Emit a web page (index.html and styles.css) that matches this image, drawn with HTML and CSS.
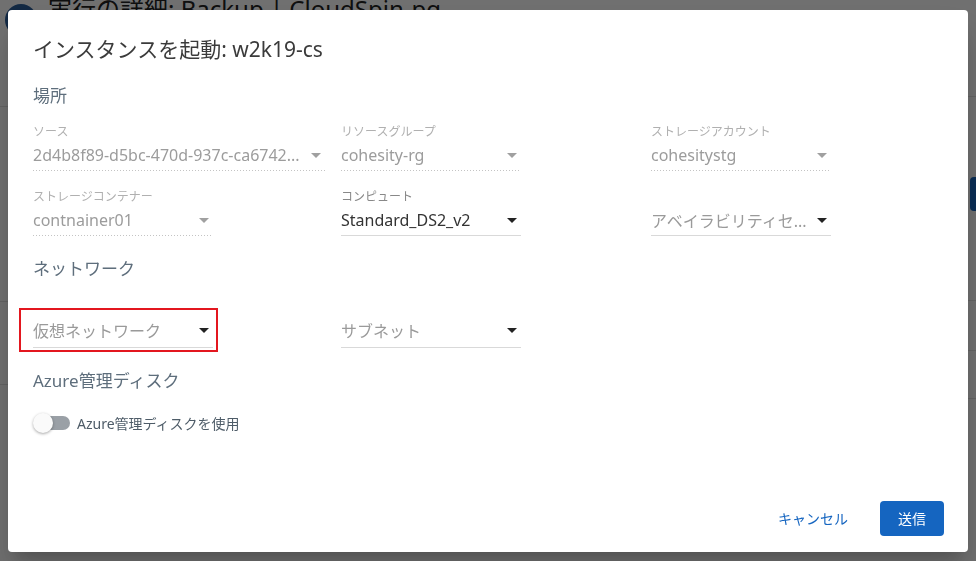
FILE: index.html
```html
<!DOCTYPE html>
<html lang="ja">
<head>
  <meta charset="UTF-8">
  <title>インスタンスを起動</title>
  <link rel="stylesheet" href="styles.css">
</head>
<body>

<div class="page">
  <div class="page-head">
    <span class="avatar"></span>
    <h1>実行の詳細: Backup | CloudSpin-pg</h1>
  </div>
  <div class="page-body">
    <div class="page-main">
      <div class="row row-a"></div>
      <div class="row row-b"></div>
      <div class="row row-c"></div>
    </div>
    <div class="page-side">
      <div class="row row-d"></div>
      <div class="row row-e"><button class="page-btn" aria-label="操作"></button></div>
      <div class="row row-f"></div>
      <div class="row row-g"></div>
    </div>
  </div>
</div>

<div class="overlay">
  <div class="dialog">
    <h2 class="dialog-title">インスタンスを起動: w2k19-cs</h2>

    <h3 class="section-title">場所</h3>
    <div class="field-grid">
      <div class="field field-wide disabled">
        <div class="field-label">ソース</div>
        <div class="control"><span class="value">2d4b8f89-d5bc-470d-937c-ca6742...</span><span class="arrow"></span></div>
      </div>
      <div class="field disabled">
        <div class="field-label">リソースグループ</div>
        <div class="control"><span class="value">cohesity-rg</span><span class="arrow"></span></div>
      </div>
      <div class="field disabled">
        <div class="field-label">ストレージアカウント</div>
        <div class="control"><span class="value">cohesitystg</span><span class="arrow"></span></div>
      </div>

      <div class="field disabled">
        <div class="field-label">ストレージコンテナー</div>
        <div class="control"><span class="value">contnainer01</span><span class="arrow"></span></div>
      </div>
      <div class="field">
        <div class="field-label">コンピュート</div>
        <div class="control"><span class="value">Standard_DS2_v2</span><span class="arrow"></span></div>
      </div>
      <div class="field">
        <div class="field-label"></div>
        <div class="control"><span class="placeholder">アベイラビリティセ...</span><span class="arrow"></span></div>
      </div>
    </div>

    <h3 class="section-title">ネットワーク</h3>
    <div class="field-grid network-grid">
      <div class="field highlight">
        <div class="field-label"></div>
        <div class="control"><span class="placeholder">仮想ネットワーク</span><span class="arrow"></span></div>
      </div>
      <div class="field">
        <div class="field-label"></div>
        <div class="control"><span class="placeholder">サブネット</span><span class="arrow"></span></div>
      </div>
    </div>

    <h3 class="section-title">Azure管理ディスク</h3>
    <label class="toggle-row">
      <span class="toggle"><span class="toggle-thumb"></span></span>
      <span class="toggle-label">Azure管理ディスクを使用</span>
    </label>

    <div class="dialog-actions">
      <button class="btn-link">キャンセル</button>
      <button class="btn-primary">送信</button>
    </div>
  </div>
</div>

</body>
</html>
```

FILE: styles.css
```css
body {
  margin: 0;
  font-family: "Noto Sans", "Noto Sans CJK JP", sans-serif;
  background: #fff;
  color: #333;
  overflow: hidden;
}

/* page behind the dialog */
.page {
  height: 561px;
}
.page-head {
  display: flex;
  align-items: flex-start;
  gap: 11px;
  padding: 4px 0 0 5px;
  height: 36px;
}
.avatar {
  width: 32px;
  height: 32px;
  border-radius: 50%;
  background: #2b5d9a;
  flex: none;
}
.page-head h1 {
  margin: -11px 0 0;
  font-size: 24px;
  font-weight: 400;
  line-height: 32px;
  color: #222;
}
.page-body {
  display: flex;
}
.page-main {
  flex: 1;
}
.page-side {
  width: 300px;
}
.row {
  border-bottom: 1px solid #e2e2e2;
}
.row-a { height: 66px; }
.row-b { height: 194px; }
.row-c { height: 82px; }
.row-d { height: 56px; }
.row-e {
  height: 204px;
  display: flex;
  justify-content: flex-end;
  align-items: flex-start;
  padding-top: 80px;
  box-sizing: border-box;
}
.row-f { height: 49px; }
.row-g { height: 47px; }
.page-btn {
  width: 40px;
  height: 34px;
  margin-right: -34px;
  border: none;
  border-radius: 4px;
  background: #1565c0;
}

.overlay {
  position: fixed;
  inset: 0;
  background: rgba(0, 0, 0, 0.56);
  display: flex;
  align-items: center;
  justify-content: center;
}

/* dialog */
.dialog {
  width: 960px;
  height: 542px;
  box-sizing: border-box;
  padding: 25px 24px 16px 25px;
  background: #fff;
  border-radius: 4px;
  box-shadow: 0 11px 15px -7px rgba(0,0,0,.2), 0 24px 38px 3px rgba(0,0,0,.14);
  display: flex;
  flex-direction: column;
}
.dialog-title {
  margin: 0;
  font-size: 21px;
  font-weight: 400;
  line-height: 28px;
  color: #3b3b3b;
}
.section-title {
  margin: 21px 0 0;
  font-size: 17px;
  font-weight: 400;
  line-height: 24px;
  color: #5e6e7c;
}
.field-grid {
  display: grid;
  grid-template-columns: 308px 310px 1fr;
  row-gap: 18px;
  margin-top: 16px;
}
.network-grid {
  margin-top: 18px;
}
.network-grid .control {
  height: 33px;
  padding-bottom: 2px;
}
.field {
  width: 180px;
  position: relative;
}
.field-wide {
  width: 292px;
}
.field-label {
  height: 16px;
  font-size: 12px;
  line-height: 16px;
  color: #888;
}
.control {
  height: 31px;
  box-sizing: border-box;
  padding-top: 1px;
  display: flex;
  align-items: center;
  border-bottom: 1px solid #d9d9d9;
}
.value, .placeholder {
  flex: 1;
  white-space: nowrap;
  overflow: hidden;
  font-size: 16px;
  color: #333;
}
.placeholder {
  color: #9a9a9a;
}
.arrow {
  width: 0;
  height: 0;
  border-left: 5px solid transparent;
  border-right: 5px solid transparent;
  border-top: 5px solid #222;
  margin: 0 4px 0 8px;
}
.disabled .field-label {
  color: #b0b0b0;
}
.disabled .value {
  color: #9c9c9c;
}
.disabled .arrow {
  border-top-color: #a0a0a0;
}
.disabled .control {
  border-bottom: none;
  padding-bottom: 1px;
  background-image: linear-gradient(to right, #c4c4c4 1px, transparent 1px);
  background-size: 3px 1px;
  background-repeat: repeat-x;
  background-position: left bottom;
}
.highlight::after {
  content: "";
  position: absolute;
  left: -14px;
  right: -5px;
  top: 9px;
  bottom: -4px;
  border: 2px solid #e3171f;
}

/* toggle */
.toggle-row {
  display: flex;
  align-items: center;
  margin-top: 20px;
  height: 20px;
}
.toggle {
  position: relative;
  width: 36px;
  height: 14px;
  border-radius: 7px;
  background: #9aa0a6;
  margin-left: 1px;
}
.toggle-thumb {
  position: absolute;
  left: -1px;
  top: -3px;
  width: 20px;
  height: 20px;
  border-radius: 50%;
  background: #fafafa;
  box-shadow: 0 1px 3px rgba(0,0,0,.35);
}
.toggle-label {
  margin-left: 7px;
  font-size: 14px;
  color: #4e5c68;
}

.dialog-actions {
  margin-top: auto;
  display: flex;
  justify-content: flex-end;
  gap: 16px;
}
.btn-link, .btn-primary {
  height: 35px;
  font-family: inherit;
  font-size: 14px;
  border: none;
  border-radius: 4px;
  cursor: pointer;
}
.btn-link {
  background: none;
  color: #1565c0;
  padding: 0 16px;
}
.btn-primary {
  width: 64px;
  background: #1565c0;
  color: #fff;
}
```
